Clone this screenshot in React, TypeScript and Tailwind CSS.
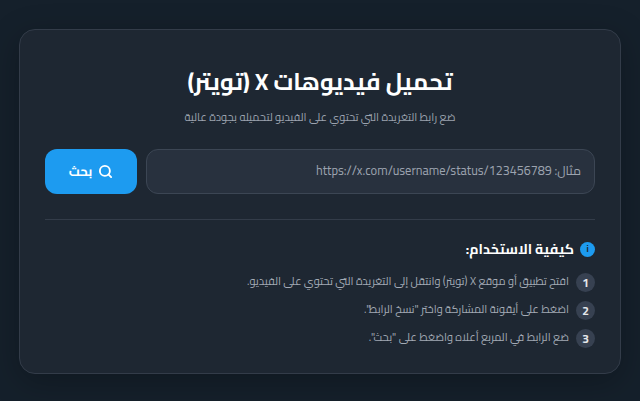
import { Search } from "lucide-react";

const steps = [
  "افتح تطبيق أو موقع X (تويتر) وانتقل إلى التغريدة التي تحتوي على الفيديو.",
  "اضغط على أيقونة المشاركة واختر \"نسخ الرابط\".",
  "ضع الرابط في المربع أعلاه واضغط على \"بحث\".",
];

export default function App() {
  return (
    <div dir="rtl" className="w-[640px] h-[401px] overflow-hidden bg-[#15202b] pt-[29px] px-[19px] font-['Cairo','DejaVu_Sans','Noto_Sans',sans-serif]">
      <div className="h-[345px] rounded-2xl border border-[#333c49] bg-[#1e2732] px-[25px] pt-[29px] shadow-[0_8px_32px_rgba(0,0,0,0.25)]">
        <h1 className="text-center text-[23.5px] leading-[44px] font-bold text-white">تحميل فيديوهات X (تويتر)</h1>
        <p className="mt-[2px] text-center text-[11px] leading-[24px] text-[#9ca3af]">ضع رابط التغريدة التي تحتوي على الفيديو لتحميله بجودة عالية</p>
        <div className="mt-[20px] flex gap-[9px]">
          <div className="flex h-[45px] flex-1 items-center rounded-xl border border-[#3c4654] bg-[#28313e] px-[13px] text-[12.5px] text-[#9ca3af]">
            مثال: https://x.com/username/status/123456789
          </div>
          <button className="flex h-[45px] w-[92px] items-center justify-center gap-[6px] rounded-xl bg-[#1d9bf0] text-[13px] font-bold text-white">
            <Search size={15} strokeWidth={3} />
            <span>بحث</span>
          </button>
        </div>
        <div className="mt-[25px] border-t border-[#333c49]" />
        <div className="mt-[17px] flex items-center gap-[6px]">
          <div className="flex h-[15px] w-[15px] items-center justify-center rounded-full bg-[#1d9bf0] text-[9px] font-bold text-[#1e2732]">i</div>
          <h2 className="text-[14px] leading-[24px] font-bold text-white">كيفية الاستخدام:</h2>
        </div>
        <ol className="mt-[12px] flex flex-col gap-[9px]">
          {steps.map((s, i) => (
            <li key={i} className="flex h-[19px] items-center gap-[7px] text-[11px] text-[#a3aab5]">
              <span className="flex h-[19px] w-[19px] shrink-0 items-center justify-center rounded-full bg-[#374151] text-[12px] font-bold text-[#e5e7eb]">{i + 1}</span>
              <span className="-mt-[2px]">{s}</span>
            </li>
          ))}
        </ol>
      </div>
    </div>
  );
}
